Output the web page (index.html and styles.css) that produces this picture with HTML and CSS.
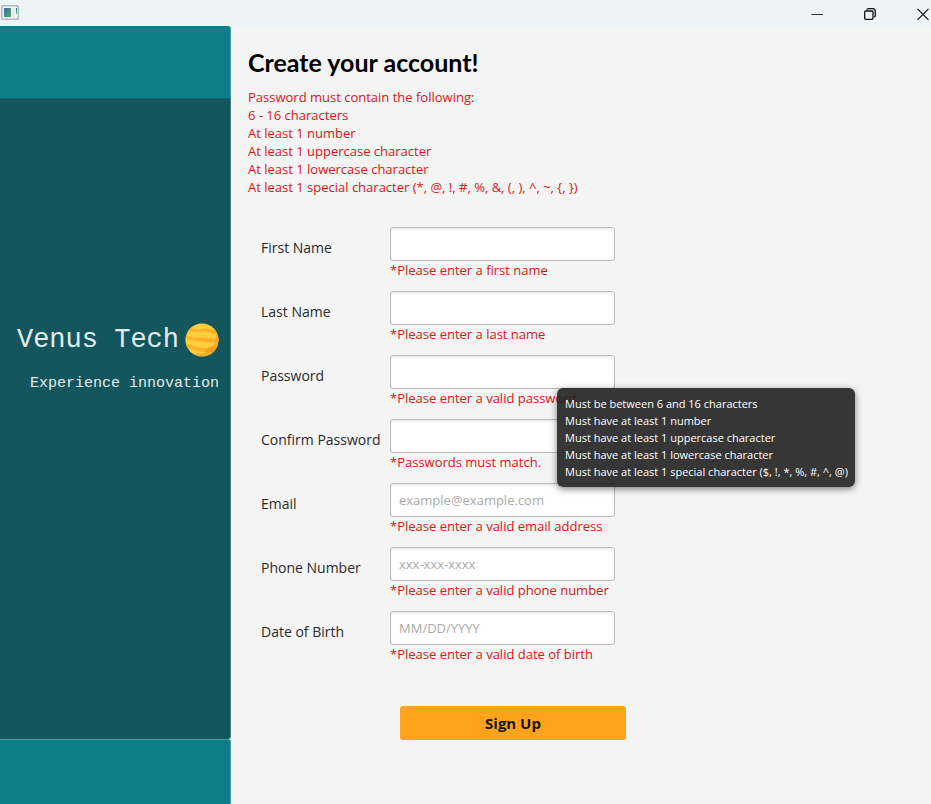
FILE: index.html
```html
<!DOCTYPE html>
<html lang="en">
<head>
<meta charset="utf-8">
<title>Create your account</title>
<meta name="viewport" content="width=device-width, initial-scale=1">
<link rel="stylesheet" href="styles.css">
</head>
<body>
<header class="titlebar">
  <svg class="app-icon" width="18" height="15" viewBox="0 0 18 15" aria-hidden="true">
    <defs><linearGradient id="pane" x1="0" y1="0" x2="1" y2="1"><stop offset="0" stop-color="#3d6f9c"/><stop offset="1" stop-color="#4fa877"/></linearGradient></defs>
    <rect x=".75" y=".75" width="16.5" height="13.5" rx="1" fill="#f3f4f4" stroke="#b4b7bd" stroke-width="1.5"/>
    <rect x="3" y="3" width="7" height="9" fill="url(#pane)"/>
    <rect x="11" y="3" width="3" height="9" fill="#e9e9e9"/>
    <path d="M15 3h1v3h-1z" fill="#2678a8"/><path d="M15 6h1v3h-1z" fill="#54b878"/>
  </svg>
  <div class="window-controls">
    <button type="button" aria-label="Minimize"><svg width="14" height="14" viewBox="0 0 14 14"><path d="M1.5 7.5h11.500" stroke="#333"/></svg></button>
    <button type="button" aria-label="Restore"><svg width="14" height="14" viewBox="0 0 14 14" fill="none" stroke="#111" stroke-width="1.300"><rect x="1.700" y="4" width="8.300" height="8.300" rx="1"/><path d="M3.800 2.800Q4.200 1.600 5.500 1.600H9.500Q12.300 1.600 12.300 4.500V8.500Q12.300 9.700 11.200 10.200"/></svg></button>
    <button type="button" aria-label="Close"><svg width="14" height="14" viewBox="0 0 14 14"><path d="M1.500 1.800l11 11M12.500 1.800l-11 11" stroke="#111" stroke-width="1.200"/></svg></button>
  </div>
</header>
<div class="layout">
  <aside class="sidebar">
    <div class="band band-top"></div>
    <div class="brand">
      <div class="brand-name">
        <span>Venus Tech</span>
        <svg width="34" height="34" viewBox="0 0 34 34" aria-hidden="true">
          <defs><clipPath id="disc"><circle cx="17" cy="17" r="16.500"/></clipPath></defs>
          <g clip-path="url(#disc)">
            <path fill="#ffce3b" d="M0 0h34v34H0z"/>
            <path fill="#ffae2b" d="M4 4C10 8 15 6 20 5.500S27 8 34 7V10C28 11 24 9 19 8S9 10 3 8z"/>
            <path fill="#ffae2b" d="M0 12C6 16 12 14 18 14.500S26 17 34 14.500V18C27 20 23 20 17 18.500S6 18 0 16z"/>
            <path fill="#ffae2b" d="M0 21C5 21 9 24 14 24.500S21 26 24 24.500 30 22 34 22V26C28 26 23 30 15 28.500S5 25 0 25z"/>
            <path fill="#f7931e" d="M30 5C33 15 30 24 21 28.500 16 31 11 31 7 30L15 36 30 32 36 17z" opacity=".5"/>
            <path fill="#ff9d22" d="M22 25Q28 23 34 22L29 30 20 28z"/>
          </g>
        </svg>
      </div>
      <div class="tagline">Experience innovation</div>
    </div>
    <div class="band band-bottom"></div>
  </aside>
  <main class="content">
    <h1>Create your account!</h1>
    <div class="rules">
      <p>Password must contain the following:</p>
      <p>6 - 16 characters</p>
      <p>At least 1 number</p>
      <p>At least 1 uppercase character</p>
      <p>At least 1 lowercase character</p>
      <p>At least 1 special character (*, @, !, #, %, &amp;, (, ), ^, ~, {, })</p>
    </div>
    <form class="form">
      <div class="row">
        <label for="first">First Name</label>
        <div class="field"><input id="first" type="text"><p class="error">*Please enter a first name</p></div>
      </div>
      <div class="row">
        <label for="last">Last Name</label>
        <div class="field"><input id="last" type="text"><p class="error">*Please enter a last name</p></div>
      </div>
      <div class="row">
        <label for="password">Password</label>
        <div class="field">
          <input id="password" type="password" aria-describedby="password-tip"><p class="error">*Please enter a valid password</p>
          <div class="tooltip" id="password-tip" role="tooltip">
            <p>Must be between 6 and 16 characters</p>
            <p>Must have at least 1 number</p>
            <p>Must have at least 1 uppercase character</p>
            <p>Must have at least 1 lowercase character</p>
            <p>Must have at least 1 special character ($, !, *, %, #, ^, @)</p>
          </div>
        </div>
      </div>
      <div class="row">
        <label for="confirm">Confirm Password</label>
        <div class="field"><input id="confirm" type="password"><p class="error">*Passwords must match.</p></div>
      </div>
      <div class="row">
        <label for="email">Email</label>
        <div class="field"><input id="email" type="email" placeholder="example@example.com"><p class="error">*Please enter a valid email address</p></div>
      </div>
      <div class="row">
        <label for="phone">Phone Number</label>
        <div class="field"><input id="phone" type="tel" placeholder="xxx-xxx-xxxx"><p class="error">*Please enter a valid phone number</p></div>
      </div>
      <div class="row">
        <label for="dob">Date of Birth</label>
        <div class="field"><input id="dob" type="text" placeholder="MM/DD/YYYY"><p class="error">*Please enter a valid date of birth</p></div>
      </div>
      <button class="submit" type="submit">Sign Up</button>
    </form>
  </main>
</div>
</body>
</html>
```
FILE: styles.css
```css
* { box-sizing: border-box; }
body {
  margin: 0;
  min-height: 100vh;
  display: flex;
  flex-direction: column;
  background: #f4f4f4;
  color: #2b2b2b;
  font-family: "Open Sans", "Noto Sans", sans-serif;
  font-size: 13px;
}
p, h1 { margin: 0; }
.titlebar {
  height: 26px;
  display: flex;
  justify-content: space-between;
  background: #ecf4f8;
}
.app-icon { margin: 5px 1px; }
.window-controls { display: flex; gap: 39px; padding: 7px 1px 0; }
.window-controls button {
  width: 14px;
  height: 14px;
  padding: 0;
  border: 0;
  background: none;
}
.window-controls svg { display: block; }
.layout { flex: 1; display: flex; }
.sidebar {
  width: 231px;
  flex: none;
  display: flex;
  flex-direction: column;
}
.band { background: #0d7e88; border-right: 1px solid #4b9ca3; }
.band-top { height: 72px; border-top-right-radius: 3px; }
.band-bottom { height: 65px; border-top: 1px solid #4b9ca3; border-top-right-radius: 3px; }
.brand {
  flex: 1;
  padding: 223px 11px 0 0;
  background: #14565e;
  border-top: 1px solid #106871;
  border-right: 1px solid #4b7f85;
  border-bottom-right-radius: 3px;
  color: #e4eced;
  font-family: "Courier New", "Liberation Mono", monospace;
  text-align: right;
}
.brand-name {
  display: flex;
  align-items: center;
  justify-content: flex-end;
  gap: 6px;
  font-size: 27px;
  line-height: 36px;
}
.tagline { margin-top: 16px; font-size: 15px; line-height: 20px; }
.content { flex: 1; min-width: 0; padding: 18px 17px 0; }
h1 {
  color: #000;
  font-family: Lato, "Open Sans", sans-serif;
  font-size: 25px;
  line-height: 36px;
}
.rules { margin-top: 8px; color: #dc1414; line-height: 18px; }
.form { padding: 31px 0 0 13px; }
.row {
  display: grid;
  grid-template-columns: 129px minmax(0, 225px);
  min-height: 64px;
}
.row label { padding-top: 11px; font-size: 14px; line-height: 20px; }
.field { position: relative; }
.field input {
  display: block;
  width: 100%;
  height: 34px;
  padding: 0 8px;
  border: 1px solid #bababa;
  border-radius: 3px;
  background: #fff;
  box-shadow: inset 0 2px 2px #eee;
  font: inherit;
}
.field input::placeholder { color: #aaa; opacity: 1; }
.error { color: #dc1414; line-height: 18px; }
.tooltip {
  position: absolute;
  z-index: 1;
  top: 33px;
  left: 167px;
  width: max-content;
  padding: 7px;
  padding-left: 8px;
  border-radius: 6px;
  background: rgba(30, 30, 30, 0.89);
  box-shadow: 0 2px 7px rgba(0, 0, 0, 0.5);
  color: #fff;
  font-size: 11px;
  line-height: 17px;
}
.submit {
  display: block;
  width: 226px;
  height: 34px;
  margin: 31px 0 0 139px;
  padding: 0;
  border: 0;
  border-radius: 3px;
  background: #ffa31c;
  color: #151515;
  font-family: inherit;
  font-size: 15px;
  font-weight: 700;
}
```
